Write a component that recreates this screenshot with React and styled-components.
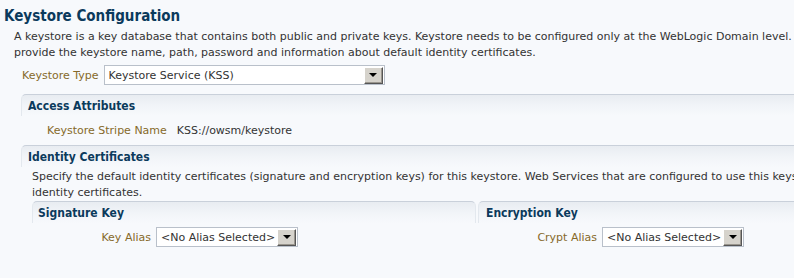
import styled, { createGlobalStyle } from "styled-components"

const GlobalStyle = createGlobalStyle`
    html, body {
        margin: 0;
        background: #f7f9fc;
        overflow: hidden;
    }
    body {
        font-family: "DejaVu Sans", sans-serif;
        font-size: 11px;
        color: #333333;
    }
`

const Page = styled.div`
    width: 1000px;
    padding: 7px 0 0 4px;
`

const Title = styled.h1`
    margin: 0;
    font-family: "DejaVu Sans Condensed", "DejaVu Sans", sans-serif;
    font-size: 15px;
    line-height: 18px;
    font-weight: bold;
    color: #0b3a5c;
`

const Intro = styled.div`
    padding: 4px 0 0 10px;
    line-height: 16px;
    white-space: nowrap;
`

const Row = styled.div`
    display: flex;
    align-items: center;
    gap: ${p => p.$gap || 5}px;
    padding: ${p => p.$pad || "0"};
    line-height: 13px;
`

const Label = styled.span`
    color: #86692a;
    white-space: nowrap;
    width: ${p => (p.$width ? p.$width + "px" : "auto")};
    text-align: ${p => (p.$width ? "right" : "left")};
    flex-shrink: 0;
`

const Value = styled.span`
    color: #333333;
`

const SelectBox = styled.div`
    display: flex;
    align-items: center;
    box-sizing: border-box;
    width: ${p => p.$width}px;
    height: 20px;
    background: #ffffff;
    border: 1px solid #b9c0ca;
    padding: 0 1px 0 4px;
`

const SelectText = styled.span`
    flex: 1;
    white-space: nowrap;
    overflow: hidden;
`

const DropButton = styled.span`
    display: flex;
    align-items: center;
    justify-content: center;
    box-sizing: border-box;
    width: 19px;
    height: 17px;
    background: #d6d3cc;
    border-top: 1px solid #ffffff;
    border-left: 1px solid #ffffff;
    border-right: 1px solid #555555;
    border-bottom: 1px solid #555555;
    box-shadow: inset -1px -1px 0 #9a968e;
`

const Arrow = styled.span`
    width: 0;
    height: 0;
    border-left: 4px solid transparent;
    border-right: 4px solid transparent;
    border-top: 4px solid #000000;
`

const Panel = styled.section`
    margin: ${p => p.$margin || "0"};
`

const PanelHeader = styled.div`
    box-sizing: border-box;
    height: 22px;
    padding: 4px 0 0 ${p => p.$indent || 6}px;
    line-height: 14px;
    border-top: 1px solid #c9d0da;
    border-top-left-radius: 5px;
    border-top-right-radius: ${p => (p.$roundRight ? "5px" : "0")};
    border-left: 1px solid #e3e8ee;
    border-right: ${p => (p.$roundRight ? "1px solid #e3e8ee" : "none")};
    background: linear-gradient(to bottom, #e8ecf1 0%, #f1f4f8 50%, #f7f9fc 100%);
    font-family: "DejaVu Sans Condensed", "DejaVu Sans", sans-serif;
    font-weight: bold;
    font-size: 12px;
    color: #0b3a5c;
`

const PanelBody = styled.div`
    padding: ${p => p.$pad || "0"};
`

const Description = styled.div`
    line-height: 16px;
    white-space: nowrap;
    padding: 2px 0 0 11px;
`

const Columns = styled.div`
    display: grid;
    grid-template-columns: 444px 444px;
    column-gap: 2px;
    margin: 0 0 0 11px;
`

function Select({ width, value }) {
    return (
        <SelectBox $width={width}>
            <SelectText>{value}</SelectText>
            <DropButton><Arrow /></DropButton>
        </SelectBox>
    )
}

export default function App() {
    return (
        <>
            <GlobalStyle />
            <Page>
                <Title>Keystore Configuration</Title>
                <Intro>
                    A keystore is a key database that contains both public and private keys. Keystore needs to be configured only at the WebLogic Domain level.
                    <br />
                    provide the keystore name, path, password and information about default identity certificates.
                </Intro>

                <Row $pad="4px 0 0 18px">
                    <Label>Keystore Type</Label>
                    <Select width={281} value="Keystore Service (KSS)" />
                </Row>

                <Panel $margin="9px 0 0 17px">
                    <PanelHeader>Access Attributes</PanelHeader>
                    <PanelBody $pad="8px 0 7px 26px">
                        <Row $gap={10}>
                            <Label>Keystore Stripe Name</Label>
                            <Value>KSS://owsm/keystore</Value>
                        </Row>
                    </PanelBody>
                </Panel>

                <Panel $margin="1px 0 0 17px">
                    <PanelHeader>Identity Certificates</PanelHeader>
                    <Description>
                        Specify the default identity certificates (signature and encryption keys) for this keystore. Web Services that are configured to use this keystore
                        <br />
                        identity certificates.
                    </Description>
                    <Columns>
                        <Panel>
                            <PanelHeader $roundRight $indent={5}>Signature Key</PanelHeader>
                            <PanelBody $pad="4px 0 0 0">
                                <Row>
                                    <Label $width={119}>Key Alias</Label>
                                    <Select width={142} value="<No Alias Selected>" />
                                </Row>
                            </PanelBody>
                        </Panel>
                        <Panel>
                            <PanelHeader $indent={7}>Encryption Key</PanelHeader>
                            <PanelBody $pad="4px 0 0 0">
                                <Row>
                                    <Label $width={119}>Crypt Alias</Label>
                                    <Select width={142} value="<No Alias Selected>" />
                                </Row>
                            </PanelBody>
                        </Panel>
                    </Columns>
                </Panel>
            </Page>
        </>
    )
}
